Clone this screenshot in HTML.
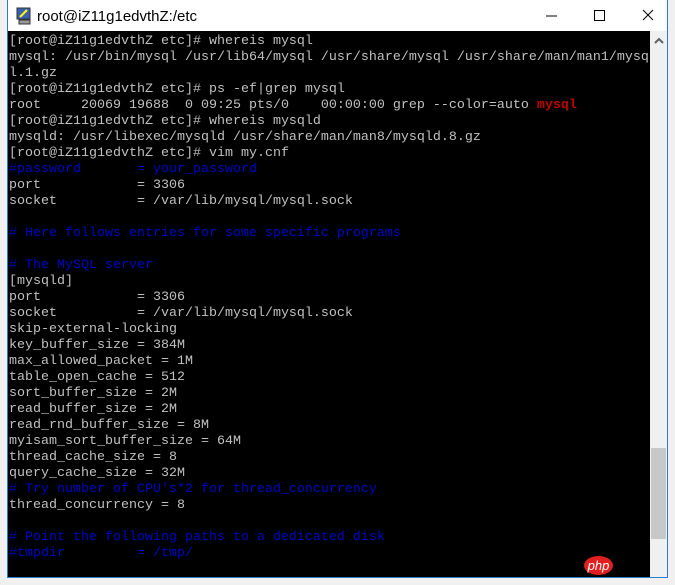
<!DOCTYPE html>
<html><head><meta charset="utf-8"><style>
body{margin:0;width:675px;height:585px;background:#f0f0f0;position:relative;overflow:hidden}
#win{position:absolute;left:7px;top:0;width:661px;height:578px;background:#fff;border:1px solid #2b7bd0;border-top:none;box-sizing:border-box}
#title{position:absolute;left:37px;top:8px;font:15px "Liberation Sans",sans-serif;color:#000}
#term{position:absolute;left:8px;top:31px;width:642px;height:546px;background:#000;overflow:hidden}
pre{margin:0;padding:3px 0 0 1px;font:13.33px/16px "Liberation Mono",monospace;color:#c0c0c0;white-space:pre}
.b{color:#0000c8}.r{color:#c00000;font-weight:bold}
#sb{position:absolute;left:650px;top:31px;width:17px;height:546px;background:#f0f0f0}
#thumb{position:absolute;left:651px;top:448px;width:15px;height:91px;background:#c8c8c8}
</style></head><body>
<div id="win"></div>
<svg style="position:absolute;left:15px;top:7px" width="18" height="18"><rect x="2" y="1" width="13" height="11" fill="#3a5fb0" stroke="#333"/><path d="M5 10 L12 3" stroke="#ff0" stroke-width="2"/><rect x="4" y="13" width="11" height="4" fill="#999" stroke="#333"/></svg>
<div id="title">root@iZ11g1edvthZ:/etc</div>
<svg style="position:absolute;left:540px;top:6px" width="120" height="20"><path d="M6 10 H17" stroke="#000"/><rect x="54.5" y="4.5" width="10" height="10" fill="none" stroke="#000"/><path d="M103 4 L113 14 M113 4 L103 14" stroke="#000"/></svg>
<div id="term"><pre>[root@iZ11g1edvthZ etc]# whereis mysql
mysql: /usr/bin/mysql /usr/lib64/mysql /usr/share/mysql /usr/share/man/man1/mysq
l.1.gz
[root@iZ11g1edvthZ etc]# ps -ef|grep mysql
root     20069 19688  0 09:25 pts/0    00:00:00 grep --color=auto <span class="r">mysql</span>
[root@iZ11g1edvthZ etc]# whereis mysqld
mysqld: /usr/libexec/mysqld /usr/share/man/man8/mysqld.8.gz
[root@iZ11g1edvthZ etc]# vim my.cnf
<span class="b">#password       = your_password</span>
port            = 3306
socket          = /var/lib/mysql/mysql.sock

<span class="b"># Here follows entries for some specific programs</span>

<span class="b"># The MySQL server</span>
[mysqld]
port            = 3306
socket          = /var/lib/mysql/mysql.sock
skip-external-locking
key_buffer_size = 384M
max_allowed_packet = 1M
table_open_cache = 512
sort_buffer_size = 2M
read_buffer_size = 2M
read_rnd_buffer_size = 8M
myisam_sort_buffer_size = 64M
thread_cache_size = 8
query_cache_size = 32M
<span class="b"># Try number of CPU's*2 for thread_concurrency</span>
thread_concurrency = 8

<span class="b"># Point the following paths to a dedicated disk</span>
<span class="b">#tmpdir         = /tmp/</span></pre></div>
<div id="sb"></div>
<svg style="position:absolute;left:653px;top:36px" width="12" height="10"><path d="M2 7 L6 3 L10 7" stroke="#606060" stroke-width="2" fill="none"/></svg>
<div id="thumb"></div>
<div style="position:absolute;left:584px;top:556px;width:29px;height:19px;border-radius:50%;background:#e02020;color:#fff;font:italic 13px 'Liberation Sans',sans-serif;text-align:center;line-height:19px">php</div>
</body></html>
